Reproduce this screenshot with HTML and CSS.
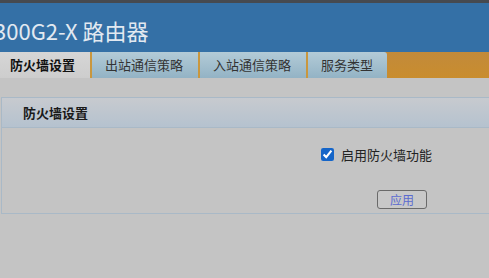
FILE: index.html
```html
<!DOCTYPE html>
<html lang="zh-CN">
<head>
    <meta charset="UTF-8">
    <title>路由器</title>
    <link rel="stylesheet" href="styles.css">
</head>
<body>
    <div class="topline"></div>
    <div class="header">
        <h1 class="title">300G2-X 路由器</h1>
    </div>
    <div class="tabbar">
        <div class="tab active">防火墙设置</div>
        <div class="tab">出站通信策略</div>
        <div class="tab">入站通信策略</div>
        <div class="tab last">服务类型</div>
    </div>
    <div class="content">
        <div class="panel">
            <div class="panel-head">防火墙设置</div>
            <div class="panel-body">
                <label class="check-row">
                    <input type="checkbox" checked>
                    <span>启用防火墙功能</span>
                </label>
                <div class="actions">
                    <button class="apply-btn">应用</button>
                </div>
            </div>
        </div>
    </div>
</body>
</html>
```

FILE: styles.css
```css
body{
    margin: 0;
    background-color: #c4c4c4;
    font-family: "Noto Sans CJK SC", "Noto Sans", sans-serif;
    overflow: hidden;
    height: 278px;
}
.topline{
    height: 3px;
    background-color: #464a50;
}
.header{
    height: 49px;
    background-color: #3470a6;
    display: flex;
    align-items: center;
    overflow: hidden;
}
.title{
    margin: 5px 0 0 -6px;
    font-size: 22px;
    font-weight: normal;
    color: #e2e9f1;
    white-space: nowrap;
}
.tabbar{
    display: flex;
    height: 26px;
    background: linear-gradient(#c28a3a, #c98d2e);
}
.tab{
    box-sizing: border-box;
    width: 108px;
    font-size: 13px;
    color: #333;
    padding-left: 13px;
    line-height: 26px;
    white-space: nowrap;
    background: linear-gradient(#b3cbd7, #93b3c5);
    border-right: 2px solid #c9973e;
}
.tab.active{
    width: 92px;
    padding-left: 10px;
    background: linear-gradient(#d6d6d6, #cdcdcd);
    color: #111;
    font-weight: bold;
}
.tab.last{
    width: 79px;
    border-right: none;
    border-top-right-radius: 3px;
}
.content{
    padding: 19px 0 0 1px;
}
.panel{
    border: 1px solid #a9b9c7;
    border-right: none;
}
.panel-head{
    height: 29px;
    line-height: 29px;
    padding-left: 21px;
    font-size: 13px;
    font-weight: bold;
    color: #1a1a1a;
    background: linear-gradient(#c7cacf, #b5c2cf);
    border-bottom: 1px solid #a9b9c7;
}
.panel-body{
    height: 85px;
    display: flex;
    flex-direction: column;
}
.check-row{
    display: flex;
    align-items: center;
    margin: 17px 0 0 318px;
    font-size: 13px;
    color: #222;
}
.check-row input{
    margin: 0 7px 0 1px;
    width: 13px;
    height: 13px;
    accent-color: #1565c8;
}
.actions{
    margin: 22px 0 0 375px;
}
.apply-btn{
    width: 50px;
    height: 19px;
    padding: 0;
    font-family: "Noto Sans CJK SC", sans-serif;
    font-size: 12px;
    line-height: 17px;
    color: #5b6bd0;
    background-color: #c8c8c8;
    border: 1px solid #6a6a6a;
    border-radius: 3px;
}
```
